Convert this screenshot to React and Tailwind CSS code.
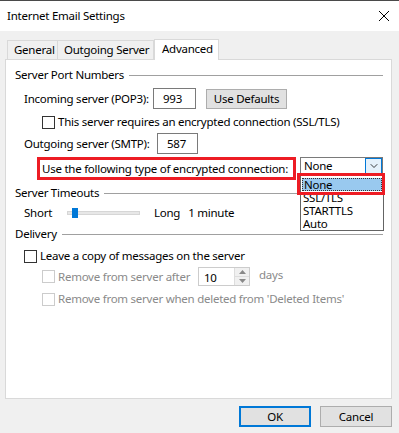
import { ChevronDown } from 'lucide-react'

const FONT = "font-['Noto_Sans',sans-serif] text-[11.5px] tracking-[-0.25px] leading-[16px]"

function Check({ disabled }) {
  return (
    <span
      className={`inline-block w-[13px] h-[13px] border bg-white shrink-0 ${disabled ? 'border-[#cccccc]' : 'border-[#333333]'}`}
    />
  )
}

function Section({ label }) {
  return (
    <div className="flex items-center h-[16px] pl-[9px] pr-[8px] whitespace-nowrap">
      <span>{label}</span>
      <div className="flex-1 h-px bg-[#a0a0a0] ml-[5px]" />
    </div>
  )
}

function TextBox({ value, w }) {
  return (
    <div className={`h-[21px] ${w} border border-[#7a7a7a] bg-white flex items-center pl-[9px]`}>
      {value}
    </div>
  )
}

export default function App() {
  return (
    <div className={`w-[399px] h-[433px] bg-[#f0f0f0] flex flex-col text-black whitespace-nowrap ${FONT}`}>
      {/* title bar */}
      <div className="h-[31px] bg-white border-t border-[#4a4a4a] flex items-center justify-between pl-[7px] pr-[8px]">
        <span>Internet Email Settings</span>
        <svg width="12" height="12" viewBox="0 0 12 12" className="mr-[1px]">
          <path d="M1 1 L11 11 M11 1 L1 11" stroke="#000" strokeWidth="1" />
        </svg>
      </div>

      {/* tabs */}
      <div className="flex items-end pl-[7px] h-[28px]">
        <div className="h-[19px] w-[51px] pl-[6px] flex items-center border border-b-0 border-[#d9d9d9] bg-[#f0f0f0]">General</div>
        <div className="h-[19px] w-[96px] pl-[6px] flex items-center border border-l-0 border-b-0 border-[#d9d9d9] bg-[#f0f0f0]">Outgoing Server</div>
        <div className="h-[21px] w-[65px] pl-[7px] flex items-start pt-[1px] border border-b-0 border-[#d9d9d9] bg-white -mb-px relative z-10">Advanced</div>
      </div>

      {/* panel */}
      <div className="relative mx-[5px] w-[387px] h-[340px] bg-white border border-[#d9d9d9] pt-[7px]">
        <Section label="Server Port Numbers" />

        <div className="flex items-center mt-[5px] ml-[18px]">
          <span className="w-[129px]">Incoming server (POP3):</span>
          <TextBox value="993" w="w-[43px]" />
          <button className="ml-[10px] h-[20px] w-[81px] bg-[#e1e1e1] border border-[#adadad] flex items-center justify-center">
            Use Defaults
          </button>
        </div>

        <div className="flex items-center mt-[5px] ml-[36px] h-[16px] gap-[3px]">
          <Check />
          <span>This server requires an encrypted connection (SSL/TLS)</span>
        </div>

        <div className="flex items-center mt-[3px] ml-[18px]">
          <span className="w-[133px]">Outgoing server (SMTP):</span>
          <TextBox value="587" w="w-[41px]" />
        </div>

        <div className="flex items-start mt-[3px] ml-[31px] h-[23px]">
          <div className="h-[23px] w-[259px] border-[3px] border-[#ed1c24] flex items-center pl-[2px]">
            Use the following type of encrypted connection:
          </div>
          <div className="ml-[4px] h-[18px] w-[83px] border border-[#7a7a7a] bg-white flex items-center justify-between pl-[3px]">
            <span>None</span>
            <span className="h-[16px] w-[17px] border border-[#0078d7] bg-[#e5f1fb] flex items-center justify-center">
              <ChevronDown size={12} strokeWidth={1.5} />
            </span>
          </div>
        </div>

        <div className="mt-[5px]">
          <Section label="Server Timeouts" />
        </div>

        <div className="flex items-center mt-[4px] ml-[18px] h-[16px]">
          <span className="w-[43px]">Short</span>
          <div className="relative w-[73px] h-[4px] bg-[#e7e7e7] border border-[#d6d6d6]">
            <div className="absolute left-[4px] -top-[4px] w-[6px] h-[10px] bg-[#0078d7]" />
          </div>
          <span className="ml-[14px]">Long</span>
          <span className="ml-[8px]">1 minute</span>
        </div>

        <div className="mt-[5px]">
          <Section label="Delivery" />
        </div>

        <div className="flex items-center mt-[6px] ml-[18px] h-[16px] gap-[3px]">
          <Check />
          <span>Leave a copy of messages on the server</span>
        </div>

        <div className="flex items-center mt-[3px] ml-[36px] h-[19px] text-[#8a8a8a]">
          <Check disabled />
          <span className="ml-[3px] w-[140px]">Remove from server after</span>
          <div className="h-[19px] w-[52px] border border-[#cccccc] bg-white flex items-center justify-between pl-[5px]">
            <span className="text-black mt-[2px]">10</span>
            <div className="h-full w-[15px] flex flex-col border-l border-[#dddddd]">
              <div className="flex-1 flex items-center justify-center bg-[#f0f0f0] border-b border-[#dddddd]">
                <svg width="7" height="4" viewBox="0 0 7 4"><path d="M0 4 L3.5 0 L7 4Z" fill="#888" /></svg>
              </div>
              <div className="flex-1 flex items-center justify-center bg-[#f0f0f0]">
                <svg width="7" height="4" viewBox="0 0 7 4"><path d="M0 0 L3.5 4 L7 0Z" fill="#888" /></svg>
              </div>
            </div>
          </div>
          <span className="ml-[9px] -mt-[3px]">days</span>
        </div>

        <div className="flex items-center mt-[5px] ml-[36px] h-[16px] gap-[3px] text-[#8a8a8a]">
          <Check disabled />
          <span>Remove from server when deleted from 'Deleted Items'</span>
        </div>

        {/* open dropdown list */}
        <div className="absolute left-[294px] top-[113px] w-[84px] h-[58px] bg-white border border-[#646464] flex flex-col pt-[4px] leading-[13px]">
          <div className="mx-[1px] h-[13px] bg-[#99c9ef] border border-dotted border-[#333] flex items-center pl-[1px]">None</div>
          <div className="pl-[2px]">SSL/TLS</div>
          <div className="pl-[2px]">STARTTLS</div>
          <div className="pl-[2px]">Auto</div>
        </div>
        <div className="absolute left-[291px] top-[113px] w-[88px] h-[22px] border-[3px] border-[#ed1c24]" />
      </div>

      {/* buttons */}
      <div className="flex justify-end gap-[9px] pr-[7px] mt-[7px]">
        <button className="h-[21px] w-[72px] bg-[#e1e1e1] border-2 border-[#0078d7]">OK</button>
        <button className="h-[21px] w-[72px] bg-[#e1e1e1] border border-[#adadad]">Cancel</button>
      </div>
    </div>
  )
}
